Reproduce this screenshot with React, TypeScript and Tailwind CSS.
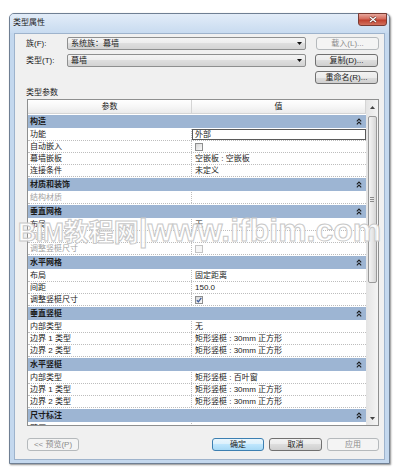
import React from "react";

type Item =
  | { kind: "section"; title: string }
  | {
      kind: "row";
      label: string;
      value?: React.ReactNode;
      gray?: boolean;
      selected?: boolean;
    };

function Collapse() {
  return (
    <svg width="6" height="7" viewBox="0 0 6 7" className="block">
      <path d="M0.8 3.3 L3 1.1 L5.2 3.3" fill="none" stroke="#1a1a1a" strokeWidth="1.1" />
      <path d="M0.8 6.3 L3 4.1 L5.2 6.3" fill="none" stroke="#1a1a1a" strokeWidth="1.1" />
    </svg>
  );
}

function Checkbox({ checked, disabled }: { checked?: boolean; disabled?: boolean }) {
  return (
    <div
      className={
        disabled
          ? "w-[8px] h-[8px] border border-[#c4c4c4] bg-[#f6f6f6]"
          : "w-[8px] h-[8px] border border-[#8e8f8f] bg-[linear-gradient(135deg,#d6d6d6,#fbfbfb)] flex items-center justify-center"
      }
    >
      {checked && (
        <svg width="6" height="6" viewBox="0 0 6 6" className="block">
          <path d="M0.8 3.2 L2.4 4.8 L5.3 0.9" fill="none" stroke="#3c5a9a" strokeWidth="1.3" />
        </svg>
      )}
    </div>
  );
}

const items: Item[] = [
  { kind: "section", title: "构造" },
  { kind: "row", label: "功能", value: "外部", selected: true },
  { kind: "row", label: "自动嵌入", value: <Checkbox /> },
  { kind: "row", label: "幕墙嵌板", value: "空嵌板 : 空嵌板" },
  { kind: "row", label: "连接条件", value: "未定义" },
  { kind: "section", title: "材质和装饰" },
  { kind: "row", label: "结构材质", gray: true },
  { kind: "section", title: "垂直网格" },
  { kind: "row", label: "布局", value: "无" },
  { kind: "row", label: "间距", gray: true },
  { kind: "row", label: "调整竖梃尺寸", gray: true, value: <Checkbox disabled /> },
  { kind: "section", title: "水平网格" },
  { kind: "row", label: "布局", value: "固定距离" },
  { kind: "row", label: "间距", value: "150.0" },
  { kind: "row", label: "调整竖梃尺寸", value: <Checkbox checked /> },
  { kind: "section", title: "垂直竖梃" },
  { kind: "row", label: "内部类型", value: "无" },
  { kind: "row", label: "边界 1 类型", value: "矩形竖梃 : 30mm 正方形" },
  { kind: "row", label: "边界 2 类型", value: "矩形竖梃 : 30mm 正方形" },
  { kind: "section", title: "水平竖梃" },
  { kind: "row", label: "内部类型", value: "矩形竖梃 : 百叶窗" },
  { kind: "row", label: "边界 1 类型", value: "矩形竖梃 : 30mm 正方形" },
  { kind: "row", label: "边界 2 类型", value: "矩形竖梃 : 30mm 正方形" },
  { kind: "section", title: "尺寸标注" },
  { kind: "row", label: "壁厚", value: "" },
];

function Combo({ text }: { text: string }) {
  return (
    <div className="w-[239px] h-[13px] border border-[#8e8f8f] rounded-[2px] bg-[linear-gradient(#f4f4f4,#ececec_50%,#dedede_50%,#d3d3d3)] flex items-center pl-[3px] pr-[3px]">
      <span className="flex-1">{text}</span>
      <svg width="5" height="3" viewBox="0 0 5 3" className="block">
        <path d="M0 0 L5 0 L2.5 3 Z" fill="#111" />
      </svg>
    </div>
  );
}

function Btn({
  children,
  kind = "normal",
  w = "w-[63px]",
}: {
  children: React.ReactNode;
  kind?: "normal" | "disabled" | "default";
  w?: string;
}) {
  const cls =
    kind === "disabled"
      ? "border-[#b5b9bc] bg-[#f4f4f4] text-[#8b8b8b]"
      : kind === "default"
      ? "border-[#3c7fb1] bg-[linear-gradient(#eaf6fd,#d9f0fc_50%,#bee6fd_50%,#a7d9f5)] text-[#1b1b1b]"
      : "border-[#707070] bg-[linear-gradient(#f2f2f2,#ebebeb_50%,#dddddd_50%,#cfcfcf)] text-[#1b1b1b]";
  return (
    <div className={`${w} h-[13px] border rounded-[3px] flex items-center justify-center ${cls}`}>
      {children}
    </div>
  );
}

function Scrollbar() {
  return (
    <div className="w-[12px] h-full bg-[linear-gradient(90deg,#e4e4e4,#f4f4f4)] flex flex-col items-center">
      <div className="h-[14px] w-full flex items-center justify-center">
        <svg width="5" height="3" viewBox="0 0 5 3" className="block">
          <path d="M0 3 L2.5 0 L5 3 Z" fill="#444" />
        </svg>
      </div>
      <div className="mt-[2px] w-[9px] h-[167px] rounded-[2px] border border-[#9a9a9a] bg-[linear-gradient(90deg,#f4f4f4,#e6e6e6_50%,#d6d6d6)] flex flex-col items-center justify-center gap-[1px]">
        <div className="w-[4px] h-[1px] bg-[#8a8a8a]" />
        <div className="w-[4px] h-[1px] bg-[#8a8a8a]" />
        <div className="w-[4px] h-[1px] bg-[#8a8a8a]" />
      </div>
      <div className="flex-1" />
      <div className="h-[14px] w-full flex items-center justify-center">
        <svg width="5" height="3" viewBox="0 0 5 3" className="block">
          <path d="M0 0 L5 0 L2.5 3 Z" fill="#444" />
        </svg>
      </div>
    </div>
  );
}

function Table() {
  return (
    <div className="ml-[1px] w-[352px] h-[327px] border border-[#8e8f8f] bg-white flex overflow-hidden">
      <div className="w-[338px] flex flex-col">
        <div className="h-[14px] flex shrink-0 border-b border-[#d5d5d5] bg-[linear-gradient(#ffffff,#f7f7f7_50%,#ebebeb)]">
          <div className="w-[164px] border-r border-[#d5d5d5] flex items-center justify-center">参数</div>
          <div className="flex-1 border-r border-[#d5d5d5] flex items-center justify-center">值</div>
        </div>
        {items.map((it, i) =>
          it.kind === "section" ? (
            <div key={i} className="h-[15px] shrink-0 py-[1px] bg-white">
              <div className="h-[13px] bg-[#9db5d3] flex items-center justify-between pl-[2px] pr-[4px] font-bold">
                <span>{it.title}</span>
                <Collapse />
              </div>
            </div>
          ) : (
            <div key={i} className="h-[12px] shrink-0 flex border-b border-dotted border-[#bdbdbd]">
              <div
                className={
                  it.gray
                    ? "w-[164px] pl-[2px] border-r border-dotted border-[#bdbdbd] flex items-center text-[#a3a3a3]"
                    : "w-[164px] pl-[2px] border-r border-dotted border-[#bdbdbd] flex items-center"
                }
              >
                {it.label}
              </div>
              {it.selected ? (
                <div className="flex-1 pl-[2px] flex items-center border border-[#5a5a5a]">{it.value}</div>
              ) : (
                <div className="flex-1 pl-[3px] flex items-center">{it.value}</div>
              )}
            </div>
          )
        )}
      </div>
      <Scrollbar />
    </div>
  );
}

export default function App() {
  return (
    <div className="relative w-[411px] h-[470px] bg-white overflow-hidden font-['Liberation_Sans','Noto_Sans_CJK_SC',sans-serif] text-[8px] leading-none text-[#1b1b1b]">
      <div className="pt-[13px] pl-[9px]">
        <div className="w-[381px] h-[451px] border border-[#6f7f93] rounded-t-[5px] bg-[#c4d8ee] flex flex-col shadow-[1px_1px_2px_rgba(0,0,0,0.45)]">
          <div className="h-[19px] shrink-0 flex items-start rounded-t-[4px] bg-[linear-gradient(#e2ecf8,#c8dbf0)]">
            <span className="pl-[3px] pt-[5px]">类型属性</span>
            <div className="ml-auto mr-[2px] mt-[-1px] w-[29px] h-[13px] rounded-b-[3px] border border-[#7a3b33] bg-[linear-gradient(#e8a79c,#d36b5c_45%,#c0402e_55%,#d2725f)] flex items-center justify-center">
              <svg width="8" height="7" viewBox="0 0 8 7" className="block">
                <path d="M1 1 L7 6 M7 1 L1 6" stroke="#5a2a24" strokeWidth="2.4" />
                <path d="M1 1 L7 6 M7 1 L1 6" stroke="#ffffff" strokeWidth="1.4" />
              </svg>
            </div>
          </div>
          <div className="mx-[4px] mb-[3px] flex-1 border border-[#9eb3cc] bg-[#f0f0f0] flex flex-col pl-[11px] pt-[3px]">
            <div className="h-[13px] flex items-center">
              <span className="w-[41px]">族(F):</span>
              <Combo text="系统族：幕墙" />
              <div className="ml-[10px]">
                <Btn kind="disabled">载入(L)...</Btn>
              </div>
            </div>
            <div className="mt-[4px] h-[13px] flex items-center">
              <span className="w-[41px]">类型(T):</span>
              <Combo text="幕墙" />
              <div className="ml-[9px]">
                <Btn>复制(D)...</Btn>
              </div>
            </div>
            <div className="mt-[4px] h-[13px] flex">
              <div className="ml-[289px]">
                <Btn>重命名(R)...</Btn>
              </div>
            </div>
            <div className="mt-[3px] h-[12px] flex items-center">类型参数</div>
            <Table />
            <div className="mt-[12px] ml-[1px] w-[352px] h-[13px] flex items-center">
              <Btn kind="disabled" w="w-[52px]">
                &lt;&lt; 预览(P)
              </Btn>
              <div className="ml-auto flex gap-[5px]">
                <Btn kind="default" w="w-[52px]">
                  确定
                </Btn>
                <Btn w="w-[53px]">取消</Btn>
                <Btn kind="disabled" w="w-[52px]">
                  应用
                </Btn>
              </div>
            </div>
          </div>
        </div>
      </div>
      <div className="absolute left-[18px] top-[214px] pointer-events-none flex items-baseline whitespace-nowrap font-bold text-white/85 [-webkit-text-stroke:1px_#c8c8c8]">
        <span className="text-[25px]">BIM教程网</span>
        <span className="text-[32px]">|www.ifbim.com</span>
      </div>
    </div>
  );
}
